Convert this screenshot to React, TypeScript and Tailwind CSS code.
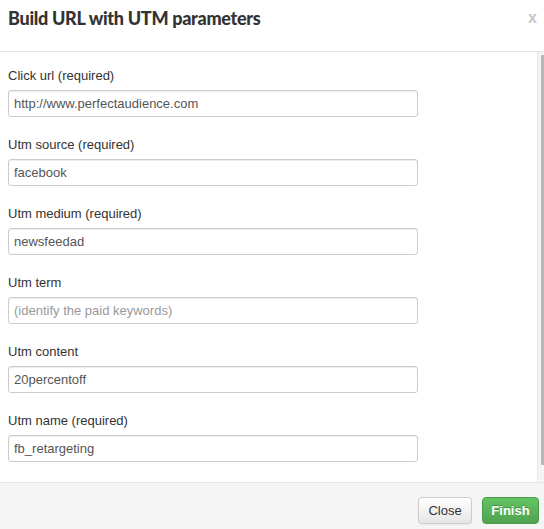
import React from "react";

const fields = [
  { label: "Click url (required)", value: "http://www.perfectaudience.com" },
  { label: "Utm source (required)", value: "facebook" },
  { label: "Utm medium (required)", value: "newsfeedad" },
  { label: "Utm term", value: "", placeholder: "(identify the paid keywords)" },
  { label: "Utm content", value: "20percentoff" },
  { label: "Utm name (required)", value: "fb_retargeting" },
];

export default function App() {
  return (
    <div
      className="w-[544px] h-[529px] flex flex-col bg-white overflow-hidden"
      style={{ fontFamily: '"Liberation Sans", Arial, sans-serif' }}
    >
      <div className="h-[52px] shrink-0 border-b border-[#e5e5e5] flex items-start justify-between pl-2 pr-[7px] pt-[6px]">
        <h3
          className="text-[18px] leading-[24px] font-black text-[#333] tracking-[-0.3px]"
          style={{ fontFamily: 'Lato, "Liberation Sans", sans-serif' }}
        >
          Build URL with UTM parameters
        </h3>
        <span className="text-[16px] leading-[24px] font-bold text-[#c8c8c8]">x</span>
      </div>
      <div className="flex-1 flex min-h-0">
        <div className="flex-1 pl-2 pt-[16px] flex flex-col gap-[20px]">
          {fields.map((f) => (
            <div key={f.label} className="flex flex-col">
              <label className="text-[13px] leading-[16px] text-[#333] mb-[6px]">{f.label}</label>
              <input
                readOnly
                value={f.value}
                placeholder={f.placeholder}
                className="w-[410px] h-[27px] border border-[#ccc] rounded-[3px] px-[5px] text-[13px] text-[#555] placeholder:text-[#999] outline-none shadow-[inset_0_1px_1px_rgba(0,0,0,0.075)]"
              />
            </div>
          ))}
        </div>
        <div className="w-[7px] shrink-0 bg-[#f4f4f4] border-l border-[#e8e8e8] flex justify-end pt-[3px] pb-[17px]">
          <div className="w-[3px] h-full bg-[#b8b8b8] rounded-l-[1px]" />
        </div>
      </div>
      <div className="h-[47px] shrink-0 border-t border-[#e5e5e5] bg-[#f5f5f5] flex justify-end items-start pt-[14px] pr-[5px] gap-[10px]">
        <button className="h-[27px] w-[54px] rounded-[4px] border border-[#ccc] bg-gradient-to-b from-white to-[#e6e6e6] text-[13px] text-[#333] shadow-[0_1px_2px_rgba(0,0,0,0.05)]">
          Close
        </button>
        <button className="h-[27px] w-[57px] rounded-[4px] border border-[#4a9c4a] bg-gradient-to-b from-[#62c462] to-[#51a351] text-[13px] font-bold text-white [text-shadow:0_-1px_0_rgba(0,0,0,0.25)]">
          Finish
        </button>
      </div>
    </div>
  );
}
